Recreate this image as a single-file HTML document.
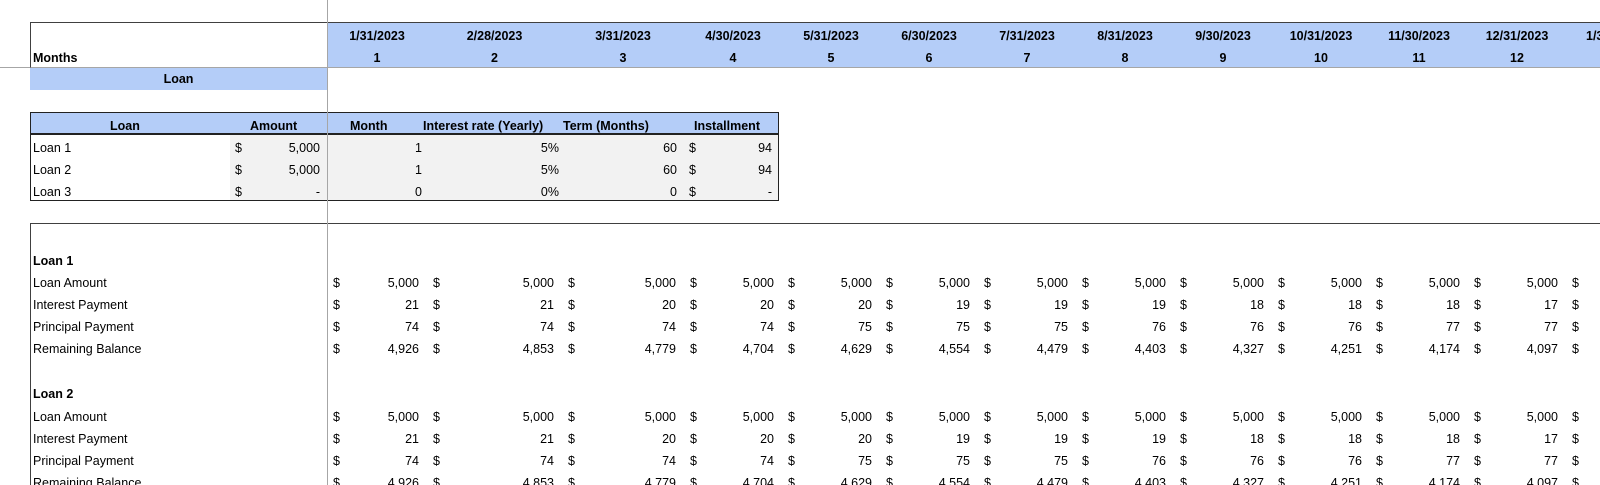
<!DOCTYPE html>
<html style="overflow:hidden;width:1600px;height:485px"><head><meta charset="utf-8"><style>
*{margin:0;padding:0;box-sizing:border-box}
body{width:1600px;height:485px;background:#fff;position:relative;overflow:hidden;font-family:"Liberation Sans",sans-serif;font-size:12.5px;color:#000}
.a{position:absolute}
.b{font-weight:bold}
.row{position:absolute;left:327px;display:flex;height:22px;line-height:22px}
.row>div{position:relative;height:22px}
.row>div>span{position:absolute;left:6px}
.row>div>i{position:absolute;right:8px;font-style:normal}
.w1{width:100px}.w2{width:135px}.w3{width:122px}.w{width:98px}.wl{width:100px}
.hd{position:absolute;left:327px;display:flex;font-weight:bold;text-align:center}
.hd>div{height:22px;line-height:22px}
.lab{position:absolute;left:33px;height:22px;line-height:22px}
.clip{position:absolute;left:0;top:472px;width:1600px;height:13px;overflow:hidden}
.clip .row,.clip .lab{top:0}
</style></head><body>
<div class="a" style="left:0;top:67px;width:327px;height:1px;background:#a6a6a6"></div>
<div class="a" style="left:30px;top:22px;width:1570px;height:46px;border:1px solid #404040;border-right:none;border-bottom:1px solid #a6a6a6"></div>
<div class="a" style="left:327px;top:23px;width:1273px;height:44px;background:#b4cdf8"></div>
<div class="a b" style="left:33px;top:50px;line-height:16px">Months</div>
<div class="hd" style="top:25px"><div class="w1">1/31/2023</div><div class="w2">2/28/2023</div><div class="w3">3/31/2023</div><div class="w">4/30/2023</div><div class="w">5/31/2023</div><div class="w">6/30/2023</div><div class="w">7/31/2023</div><div class="w">8/31/2023</div><div class="w">9/30/2023</div><div class="w">10/31/2023</div><div class="w">11/30/2023</div><div class="w">12/31/2023</div><div class="w" style="width:34px;overflow:hidden;text-align:left;padding-left:20px;white-space:nowrap">1/31/2024</div></div>
<div class="hd" style="top:47px"><div class="w1">1</div><div class="w2">2</div><div class="w3">3</div><div class="w">4</div><div class="w">5</div><div class="w">6</div><div class="w">7</div><div class="w">8</div><div class="w">9</div><div class="w">10</div><div class="w">11</div><div class="w">12</div></div>
<div class="a b" style="left:30px;top:68px;width:297px;height:22px;line-height:22px;background:#b4cdf8;text-align:center">Loan</div>
<div class="a" style="left:230px;top:134px;width:548px;height:66px;background:#f2f2f2"></div>
<div class="a" style="left:31px;top:113px;width:747px;height:21px;background:#b4cdf8"></div>
<div class="a" style="left:30px;top:112px;width:749px;height:89px;border:1px solid #222"></div>
<div class="a" style="left:31px;top:133px;width:747px;height:2px;background:#222"></div>
<div class="a b" style="top:115px;left:0;width:800px;height:22px;line-height:22px">
<span class="a" style="left:110px">Loan</span><span class="a" style="left:250px">Amount</span><span class="a" style="left:350px">Month</span><span class="a" style="left:423px">Interest rate (Yearly)</span><span class="a" style="left:563px">Term (Months)</span><span class="a" style="left:694px">Installment</span></div>
<div class="a" style="top:137px;left:0;width:800px;height:66px;line-height:22px">
<div class="a" style="top:0;left:33px">Loan 1</div><div class="a" style="top:22px;left:33px">Loan 2</div><div class="a" style="top:44px;left:33px">Loan 3</div>
<div class="a" style="top:0;left:235px">$</div><div class="a" style="top:22px;left:235px">$</div><div class="a" style="top:44px;left:235px">$</div>
<div class="a" style="top:0;right:480px">5,000</div><div class="a" style="top:22px;right:480px">5,000</div><div class="a" style="top:44px;right:480px">-</div>
<div class="a" style="top:0;right:378px">1</div><div class="a" style="top:22px;right:378px">1</div><div class="a" style="top:44px;right:378px">0</div>
<div class="a" style="top:0;right:241px">5%</div><div class="a" style="top:22px;right:241px">5%</div><div class="a" style="top:44px;right:241px">0%</div>
<div class="a" style="top:0;right:123px">60</div><div class="a" style="top:22px;right:123px">60</div><div class="a" style="top:44px;right:123px">0</div>
<div class="a" style="top:0;left:689px">$</div><div class="a" style="top:22px;left:689px">$</div><div class="a" style="top:44px;left:689px">$</div>
<div class="a" style="top:0;right:28px">94</div><div class="a" style="top:22px;right:28px">94</div><div class="a" style="top:44px;right:28px">-</div>
</div>
<div class="a" style="left:30px;top:223px;width:1570px;height:262px;border-top:1px solid #404040;border-left:1px solid #404040"></div>
<div class="a" style="left:327px;top:0;width:1px;height:485px;background:#a6a6a6"></div>
<div class="lab b" style="top:250px">Loan 1</div>
<div class="lab" style="top:272px">Loan Amount</div>
<div class="lab" style="top:294px">Interest Payment</div>
<div class="lab" style="top:316px">Principal Payment</div>
<div class="lab" style="top:338px">Remaining Balance</div>
<div class="lab b" style="top:383px">Loan 2</div>
<div class="lab" style="top:406px">Loan Amount</div>
<div class="lab" style="top:428px">Interest Payment</div>
<div class="lab" style="top:450px">Principal Payment</div>

<div class="row" style="top:272px"><div class="w1"><span>$</span><i>5,000</i></div><div class="w2"><span>$</span><i>5,000</i></div><div class="w3"><span>$</span><i>5,000</i></div><div class="w"><span>$</span><i>5,000</i></div><div class="w"><span>$</span><i>5,000</i></div><div class="w"><span>$</span><i>5,000</i></div><div class="w"><span>$</span><i>5,000</i></div><div class="w"><span>$</span><i>5,000</i></div><div class="w"><span>$</span><i>5,000</i></div><div class="w"><span>$</span><i>5,000</i></div><div class="w"><span>$</span><i>5,000</i></div><div class="w"><span>$</span><i>5,000</i></div><div class="w" style="width:34px"><span>$</span></div></div>
<div class="row" style="top:294px"><div class="w1"><span>$</span><i>21</i></div><div class="w2"><span>$</span><i>21</i></div><div class="w3"><span>$</span><i>20</i></div><div class="w"><span>$</span><i>20</i></div><div class="w"><span>$</span><i>20</i></div><div class="w"><span>$</span><i>19</i></div><div class="w"><span>$</span><i>19</i></div><div class="w"><span>$</span><i>19</i></div><div class="w"><span>$</span><i>18</i></div><div class="w"><span>$</span><i>18</i></div><div class="w"><span>$</span><i>18</i></div><div class="w"><span>$</span><i>17</i></div><div class="w" style="width:34px"><span>$</span></div></div>
<div class="row" style="top:316px"><div class="w1"><span>$</span><i>74</i></div><div class="w2"><span>$</span><i>74</i></div><div class="w3"><span>$</span><i>74</i></div><div class="w"><span>$</span><i>74</i></div><div class="w"><span>$</span><i>75</i></div><div class="w"><span>$</span><i>75</i></div><div class="w"><span>$</span><i>75</i></div><div class="w"><span>$</span><i>76</i></div><div class="w"><span>$</span><i>76</i></div><div class="w"><span>$</span><i>76</i></div><div class="w"><span>$</span><i>77</i></div><div class="w"><span>$</span><i>77</i></div><div class="w" style="width:34px"><span>$</span></div></div>
<div class="row" style="top:338px"><div class="w1"><span>$</span><i>4,926</i></div><div class="w2"><span>$</span><i>4,853</i></div><div class="w3"><span>$</span><i>4,779</i></div><div class="w"><span>$</span><i>4,704</i></div><div class="w"><span>$</span><i>4,629</i></div><div class="w"><span>$</span><i>4,554</i></div><div class="w"><span>$</span><i>4,479</i></div><div class="w"><span>$</span><i>4,403</i></div><div class="w"><span>$</span><i>4,327</i></div><div class="w"><span>$</span><i>4,251</i></div><div class="w"><span>$</span><i>4,174</i></div><div class="w"><span>$</span><i>4,097</i></div><div class="w" style="width:34px"><span>$</span></div></div>

<div class="row" style="top:406px"><div class="w1"><span>$</span><i>5,000</i></div><div class="w2"><span>$</span><i>5,000</i></div><div class="w3"><span>$</span><i>5,000</i></div><div class="w"><span>$</span><i>5,000</i></div><div class="w"><span>$</span><i>5,000</i></div><div class="w"><span>$</span><i>5,000</i></div><div class="w"><span>$</span><i>5,000</i></div><div class="w"><span>$</span><i>5,000</i></div><div class="w"><span>$</span><i>5,000</i></div><div class="w"><span>$</span><i>5,000</i></div><div class="w"><span>$</span><i>5,000</i></div><div class="w"><span>$</span><i>5,000</i></div><div class="w" style="width:34px"><span>$</span></div></div>
<div class="row" style="top:428px"><div class="w1"><span>$</span><i>21</i></div><div class="w2"><span>$</span><i>21</i></div><div class="w3"><span>$</span><i>20</i></div><div class="w"><span>$</span><i>20</i></div><div class="w"><span>$</span><i>20</i></div><div class="w"><span>$</span><i>19</i></div><div class="w"><span>$</span><i>19</i></div><div class="w"><span>$</span><i>19</i></div><div class="w"><span>$</span><i>18</i></div><div class="w"><span>$</span><i>18</i></div><div class="w"><span>$</span><i>18</i></div><div class="w"><span>$</span><i>17</i></div><div class="w" style="width:34px"><span>$</span></div></div>
<div class="row" style="top:450px"><div class="w1"><span>$</span><i>74</i></div><div class="w2"><span>$</span><i>74</i></div><div class="w3"><span>$</span><i>74</i></div><div class="w"><span>$</span><i>74</i></div><div class="w"><span>$</span><i>75</i></div><div class="w"><span>$</span><i>75</i></div><div class="w"><span>$</span><i>75</i></div><div class="w"><span>$</span><i>76</i></div><div class="w"><span>$</span><i>76</i></div><div class="w"><span>$</span><i>76</i></div><div class="w"><span>$</span><i>77</i></div><div class="w"><span>$</span><i>77</i></div><div class="w" style="width:34px"><span>$</span></div></div>
<div class="clip">
<div class="lab">Remaining Balance</div>
<div class="row"><div class="w1"><span>$</span><i>4,926</i></div><div class="w2"><span>$</span><i>4,853</i></div><div class="w3"><span>$</span><i>4,779</i></div><div class="w"><span>$</span><i>4,704</i></div><div class="w"><span>$</span><i>4,629</i></div><div class="w"><span>$</span><i>4,554</i></div><div class="w"><span>$</span><i>4,479</i></div><div class="w"><span>$</span><i>4,403</i></div><div class="w"><span>$</span><i>4,327</i></div><div class="w"><span>$</span><i>4,251</i></div><div class="w"><span>$</span><i>4,174</i></div><div class="w"><span>$</span><i>4,097</i></div><div class="w" style="width:34px"><span>$</span></div></div>
</div>
</body></html>
